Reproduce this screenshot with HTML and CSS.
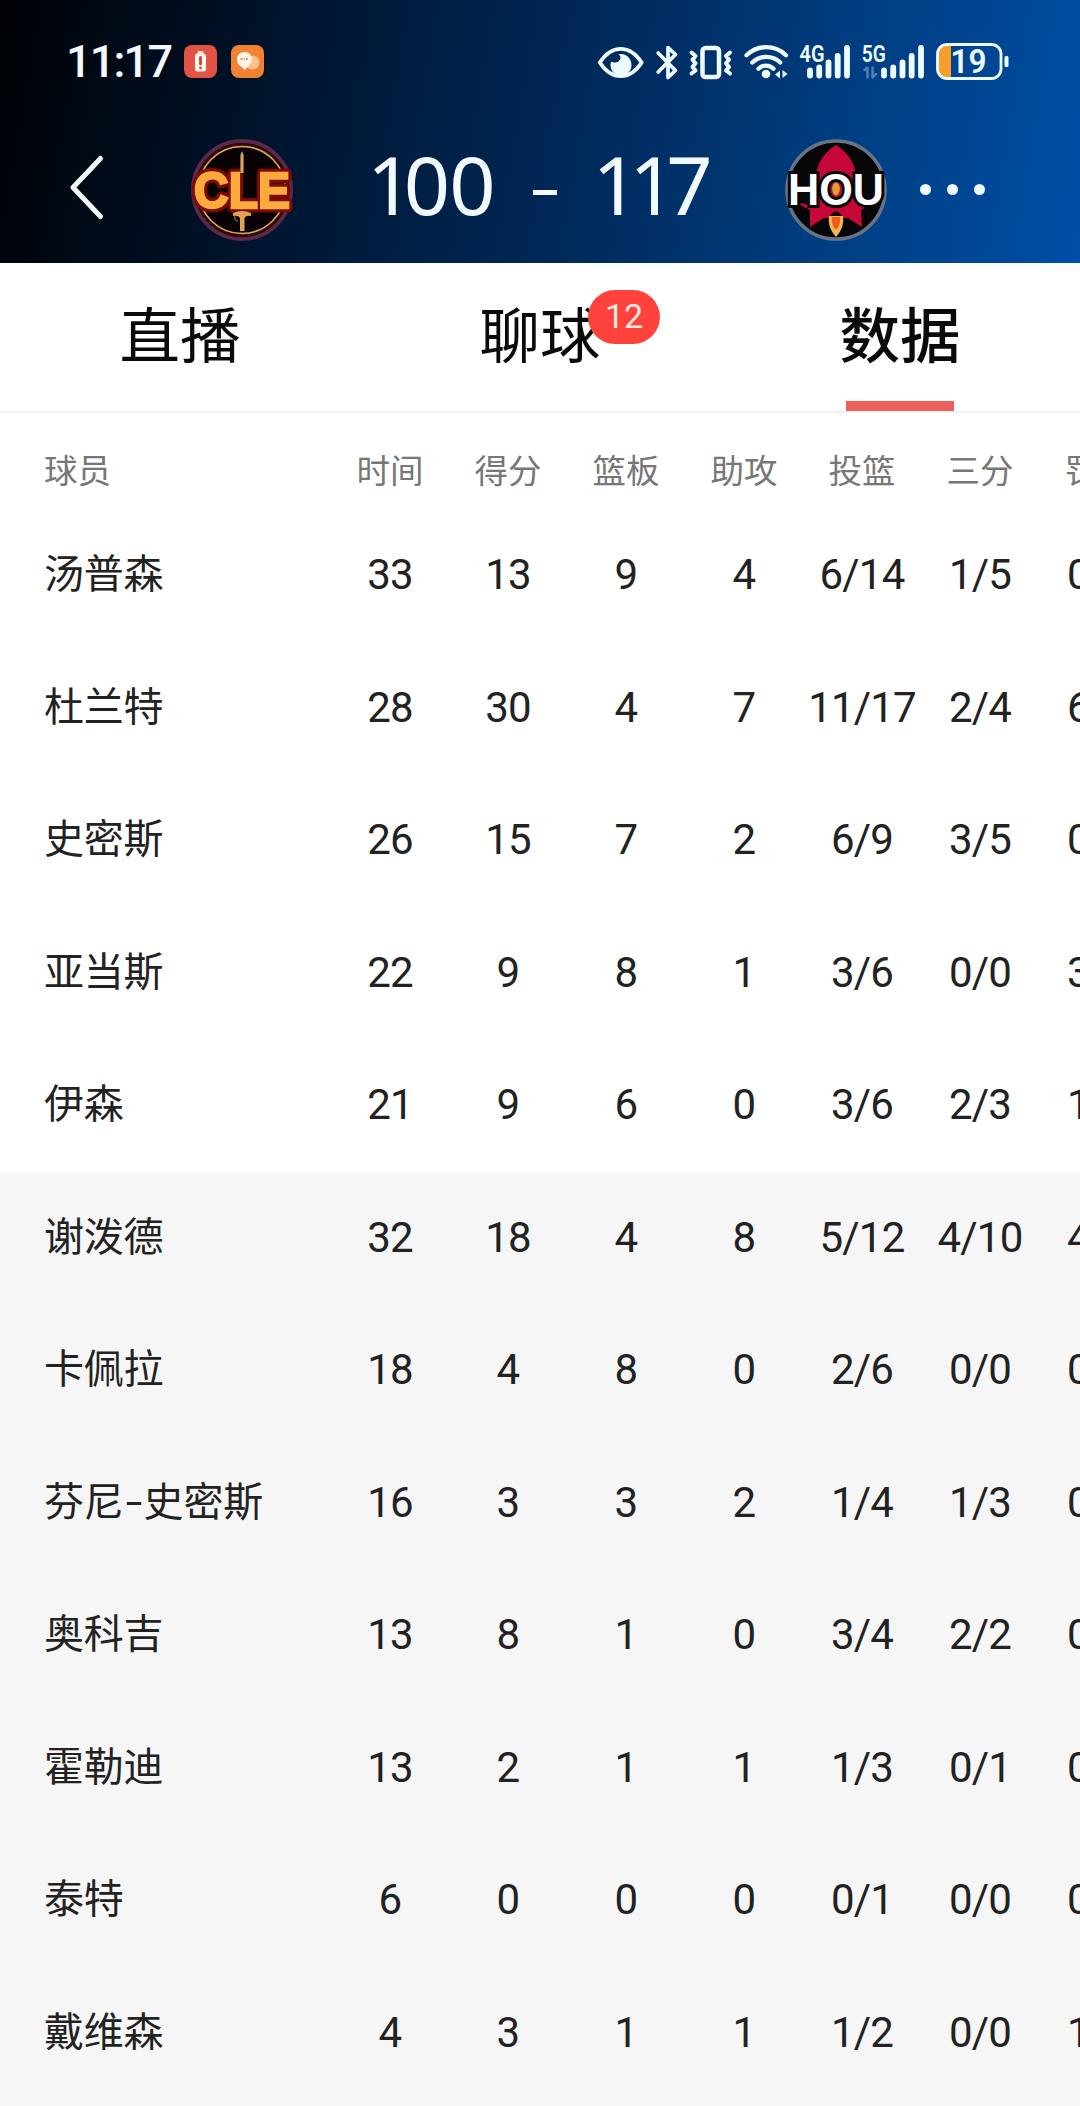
FILE: index.html
```html
<!DOCTYPE html>
<html lang="zh-CN">
<head>
    <meta charset="UTF-8">
    <meta name="viewport" content="width=device-width, initial-scale=1.0">
    <title>CLE 100 - 117 HOU</title>
    <link rel="stylesheet" href="styles.css">
</head>
<body>
    <header class="top">
        <!-- Status bar -->
        <div class="status-bar">
            <span class="time">11:17</span>
            <svg class="app-icon" width="33" height="33" viewBox="0 0 33 33">
                <rect width="33" height="33" rx="8" fill="#e25345"/>
                <rect x="13.500" y="6" width="6" height="3" rx="1" fill="#ffd9a8"/>
                <rect x="11" y="8.500" width="11" height="18" rx="2.500" fill="#fff5ee"/>
                <path d="M16.500 12.500v6.500" stroke="#d8402f" stroke-width="2.800" stroke-linecap="round"/>
                <circle cx="16.500" cy="22.800" r="1.400" fill="#d8402f"/>
            </svg>
            <svg class="app-icon second" width="33" height="33" viewBox="0 0 33 33">
                <rect width="33" height="33" rx="8" fill="#f08232"/>
                <circle cx="21.500" cy="17.500" r="7" fill="#fbc28e"/>
                <path d="M13.500 7c5 0 7.500 3.500 7.500 7.500 0 5-4.500 6.500-7 10.500-3-3-8-5-8-10.500 0-4.500 3-7.500 7.500-7.500z" fill="#fff3e6"/>
                <path d="M9.500 14h2M12.700 14h1M15 14h2" stroke="#b98b66" stroke-width="1.500"/>
            </svg>

            <svg class="status-icons" width="420" height="50" viewBox="594 36 420 50" fill="none" stroke="#eefcff" stroke-linecap="round" stroke-linejoin="round">
                <!-- eye -->
                <path d="M599.800 61.500C606 52 613 47.800 620.700 47.800S635.500 52 641.700 61.500C635.500 71 628.500 75.200 620.700 75.200S606 71 599.800 61.500z" stroke-width="3.800"/>
                <path d="M618.500 53.500c7-2 13 4 13 10.500 0 6-4.500 10.500-10.500 10.500s-10.500-4.500-10.500-10.200c0-2 .5-3 1-3.800 2.500 2.500 9 .5 9-3.800 0-1.500-.8-2.600-2-3.200z" fill="#eefcff" stroke="none"/>
                <!-- bluetooth -->
                <path d="M658.200 52L675.500 69.500L668 76.500V46.500L675.500 53.500L658.200 71" stroke-width="3.700"/>
                <!-- vibrate -->
                <rect x="702.500" y="47" width="16.500" height="29" rx="3" stroke-width="4.500"/>
                <path d="M691.500 51.500l4 3.500-3 3.800 3 3.500-3 3.700 3 3.500-4 3M730 51.500l-4 3.500 3 3.800-3 3.500 3 3.700-3 3.500 4 3" stroke-width="4"/>
                <!-- wifi -->
                <path d="M746.500 54.200C757.500 43.500 775 43.500 786 54.200M752.300 61.500C760 54 772.500 54 780.200 61.500M758.500 67.800C762.500 63.500 769.500 63.500 773.500 67.800" stroke-width="4.300"/>
                <circle cx="766" cy="73" r="4.300" fill="#eefcff" stroke="none"/>
                <path d="M775 73.500l5-4v8zM787.500 73l-5-4v8z" fill="#eefcff" stroke="none"/>
                <!-- 4G -->
                <text class="net" x="799.500" y="60.500" textLength="25" lengthAdjust="spacingAndGlyphs">4G</text>
                <path d="M810 69.500v5M819.200 66.500v8M828.500 61.500v13M837.700 55v19.500M847 46.800v27.700" stroke-width="5.800"/>
                <!-- 5G -->
                <text class="net" x="861.800" y="60.500" textLength="24" lengthAdjust="spacingAndGlyphs">5G</text>
                <path d="M864.500 69l3-2.500v10M872.500 66.500v10l3.500-3.500" stroke="#527cb5" stroke-width="2.500"/>
                <path d="M884 69.500v5M893.200 66.500v8M902.500 61.500v13M911.700 55v19.500M921 46.800v27.700" stroke-width="5.800"/>
                <!-- battery -->
                <path d="M951 44.500h-4a9 9 0 0 0-9 9v14a9 9 0 0 0 9 9h4z" fill="#f99d2a" stroke="none"/>
                <rect x="937.500" y="43.500" width="63.500" height="34" rx="9.500" stroke-width="2.800"/>
                <rect x="1004.500" y="55" width="4" height="11" rx="1.500" fill="#eefcff" stroke="none"/>
                <text class="level" x="950.500" y="72" textLength="36" lengthAdjust="spacingAndGlyphs">19</text>
            </svg>
        </div>

        <!-- Score -->
        <div class="score-bar">
            <svg class="back" width="36" height="68" viewBox="0 0 36 68" fill="none" stroke="#f2faff" stroke-width="5" stroke-linecap="round" stroke-linejoin="round">
                <path d="M31.500 5.500L4 34.500L31.500 63.500"/>
            </svg>
            <svg class="logo cle" width="106" height="106" viewBox="0 0 106 106">
                <circle cx="53" cy="53" r="49" fill="#080305" stroke="#5b2845" stroke-width="4"/>
                <circle cx="53" cy="53" r="44.500" fill="#090204" stroke="#35080c" stroke-width="4"/>
                <circle cx="53" cy="53" r="43.500" fill="none" stroke="#d8a965" stroke-width="1.600"/>
                <text class="cle-glow" x="5" y="71" textLength="96" lengthAdjust="spacingAndGlyphs">CLE</text>
                <path d="M53 14l1.600 4v18h-3.200v-18z" fill="#d9a25c"/>
                <path d="M44 76q9-4 18 0v3q-5-1-6.500 2v13h-4.500v-13q-2-3-7-2z" fill="#e4a353"/>
                <path d="M46 79q-1 5 3 5" stroke="#c98b45" fill="none"/>
                <text class="cle-text" x="5" y="71" textLength="96" lengthAdjust="spacingAndGlyphs">CLE</text>
            </svg>
            <div class="score">
                <span class="home"><span class="one">1</span>00</span>
                <span class="dash"></span>
                <span class="away"><span class="one">11</span>7</span>
            </div>
            <svg class="logo hou" width="106" height="106" viewBox="0 0 106 106">
                <circle cx="53" cy="53" r="49" fill="#060508" stroke="#687484" stroke-width="3.500"/>
                <path d="M53 8C63 14 73 26 73 40l-2 22 5 7 18-4-16 8 1 17-14-9H41l-14 9V73l-17-9 19 5 6-7-2-22C33 26 43 14 53 8z" fill="#c60838"/>
                <path d="M46 80q7-11 14 0z" fill="#120407"/>
                <path d="M46 79h14q2 11-7 21-9-10-7-21z" fill="#efb850"/>
                <path d="M49 80h8q1 8-4 13-5-5-4-13z" fill="#ee5b1c"/>
                <text class="hou-text" x="5" y="67.500" textLength="96" lengthAdjust="spacingAndGlyphs">HOU</text>
                <ellipse cx="53" cy="52" rx="3.800" ry="6.500" fill="#d9a233"/>
            </svg>
            <div class="more"><i></i><i></i><i></i></div>
        </div>
    </header>

    <!-- Tabs -->
    <nav class="tabs">
        <a class="tab">直播</a>
        <a class="tab">聊球<span class="badge">12</span></a>
        <a class="tab active">数据</a>
    </nav>

    <div class="stats-wrap">
        <table class="stats">
            <thead>
                <tr><th class="name">球员</th><th>时间</th><th>得分</th><th>篮板</th><th>助攻</th><th>投篮</th><th>三分</th><th>罚球</th></tr>
            </thead>
            <tbody class="starters">
                <tr><td class="name">汤普森</td><td>33</td><td>13</td><td>9</td><td>4</td><td>6/14</td><td>1/5</td><td>0/0</td></tr>
                <tr><td class="name">杜兰特</td><td>28</td><td>30</td><td>4</td><td>7</td><td>11/17</td><td>2/4</td><td>6/6</td></tr>
                <tr><td class="name">史密斯</td><td>26</td><td>15</td><td>7</td><td>2</td><td>6/9</td><td>3/5</td><td>0/0</td></tr>
                <tr><td class="name">亚当斯</td><td>22</td><td>9</td><td>8</td><td>1</td><td>3/6</td><td>0/0</td><td>3/4</td></tr>
                <tr><td class="name">伊森</td><td>21</td><td>9</td><td>6</td><td>0</td><td>3/6</td><td>2/3</td><td>1/2</td></tr>
            </tbody>
            <tbody class="bench">
                <tr><td class="name">谢泼德</td><td>32</td><td>18</td><td>4</td><td>8</td><td>5/12</td><td>4/10</td><td>4/4</td></tr>
                <tr><td class="name">卡佩拉</td><td>18</td><td>4</td><td>8</td><td>0</td><td>2/6</td><td>0/0</td><td>0/0</td></tr>
                <tr><td class="name">芬尼<b>-</b>史密斯</td><td>16</td><td>3</td><td>3</td><td>2</td><td>1/4</td><td>1/3</td><td>0/0</td></tr>
                <tr><td class="name">奥科吉</td><td>13</td><td>8</td><td>1</td><td>0</td><td>3/4</td><td>2/2</td><td>0/0</td></tr>
                <tr><td class="name">霍勒迪</td><td>13</td><td>2</td><td>1</td><td>1</td><td>1/3</td><td>0/1</td><td>0/0</td></tr>
                <tr><td class="name">泰特</td><td>6</td><td>0</td><td>0</td><td>0</td><td>0/1</td><td>0/0</td><td>0/0</td></tr>
                <tr><td class="name">戴维森</td><td>4</td><td>3</td><td>1</td><td>1</td><td>1/2</td><td>0/0</td><td>1/2</td></tr>
            </tbody>
        </table>
    </div>
</body>
</html>
```
FILE: styles.css
```css
* {
    margin: 0;
    padding: 0;
    box-sizing: border-box;
}
body {
    width: 1080px;
    height: 2106px;
    overflow: hidden;
    background-color: #f6f6f6;
    font-family: Roboto, "Noto Sans CJK SC", sans-serif;
    color: #222;
}
svg {
    display: block;
    flex: none;
}

/* header */
.top {
    height: 263px;
    background: linear-gradient(100deg, #000205 0%, #000d1f 17%, #001b3c 35%, #002a5c 55%, #003c7e 75%, #004a9c 94%, #004ea6 100%);
    color: #f2faff;
}
.status-bar {
    display: flex;
    align-items: center;
    height: 123px;
    padding-left: 66px;
}
.time {
    width: 118px;
    font-size: 45px;
    font-weight: 500;
    line-height: 50px;
    letter-spacing: -1.8px;
}
.app-icon.second {
    margin-left: 14px;
}
.status-icons {
    margin-left: 330px;
}
.net {
    font-size: 23px;
    font-weight: 600;
    fill: #eefcff;
    stroke: none;
}
.level {
    font-size: 33px;
    font-weight: 600;
    fill: #eefcff;
    stroke: none;
}
.score-bar {
    display: flex;
    align-items: center;
    height: 133px;
    padding-left: 69px;
}
.back {
    margin-top: -5px;
}
.logo.cle {
    margin-left: 84px;
}
.cle-glow,
.cle-text,
.hou-text {
    font-family: "Liberation Sans", Arial, sans-serif;
    font-weight: bold;
}
.cle-glow,
.cle-text {
    font-size: 50px;
    fill: #fbaa3c;
    stroke: #fbaa3c;
    stroke-width: 2.5;
}
.cle-glow {
    stroke: #7d0a08;
    stroke-width: 9;
    stroke-linejoin: round;
}
.hou-text {
    font-size: 44px;
    fill: #fff;
    stroke: #060508;
    stroke-width: 6;
    paint-order: stroke;
}
.score {
    display: flex;
    align-items: center;
    width: 488px;
    padding-left: 72px;
    font-family: "Noto Sans", sans-serif;
    font-size: 81px;
    line-height: 100px;
    letter-spacing: -1px;
}
.score .home,
.score .away {
    margin-top: -12px;
}
.score .one {
    letter-spacing: -9.5px;
}
.dash {
    width: 24px;
    height: 5px;
    margin: 6px 36px 0 38px;
    background-color: #f2faff;
}
.more {
    display: flex;
    gap: 16px;
    margin-left: 31px;
}
.more i {
    width: 11px;
    height: 11px;
    border-radius: 50%;
    background-color: #f2faff;
}

/* tabs */
.tabs {
    display: flex;
    height: 150px;
    background-color: #fff;
    border-bottom: 2px solid #f2f2f2;
}
.tab {
    position: relative;
    flex: 1;
    font-size: 60.5px;
    font-weight: 400;
    line-height: 150px;
    text-align: center;
    color: #0a0a0a;
}
.tab.active {
    font-weight: 500;
}
.tab.active::after {
    content: "";
    position: absolute;
    left: 126px;
    bottom: 0;
    width: 108px;
    height: 10px;
    background-color: #ea605c;
}
.badge {
    position: absolute;
    left: 228px;
    top: 27px;
    width: 72px;
    height: 54px;
    border-radius: 27px;
    background-color: #ff423c;
    color: #ffe9e4;
    font-size: 34px;
    line-height: 53px;
}

/* stats */
.stats-wrap {
    overflow: hidden;
}
.stats {
    width: 1157px;
    table-layout: fixed;
    border-collapse: collapse;
    background-color: #fff;
}
.stats th {
    width: 118px;
    height: 97px;
    padding-top: 21px;
    font-size: 33.500px;
    font-weight: 400;
    line-height: 60px;
    color: #777;
}
.stats td {
    height: 132.500px;
    padding-bottom: 2px;
    font-size: 42px;
    line-height: 60px;
    letter-spacing: -0.8px;
    text-align: center;
}
.stats .name {
    width: 331px;
    padding-left: 44px;
    text-align: left;
}
.stats td.name {
    font-size: 40px;
    letter-spacing: -0.2px;
}
.name b {
    display: inline-block;
    width: 20px;
    font-weight: 400;
    text-align: center;
    transform: scaleX(1.5);
}
.bench {
    background-color: #f6f6f6;
}
```
